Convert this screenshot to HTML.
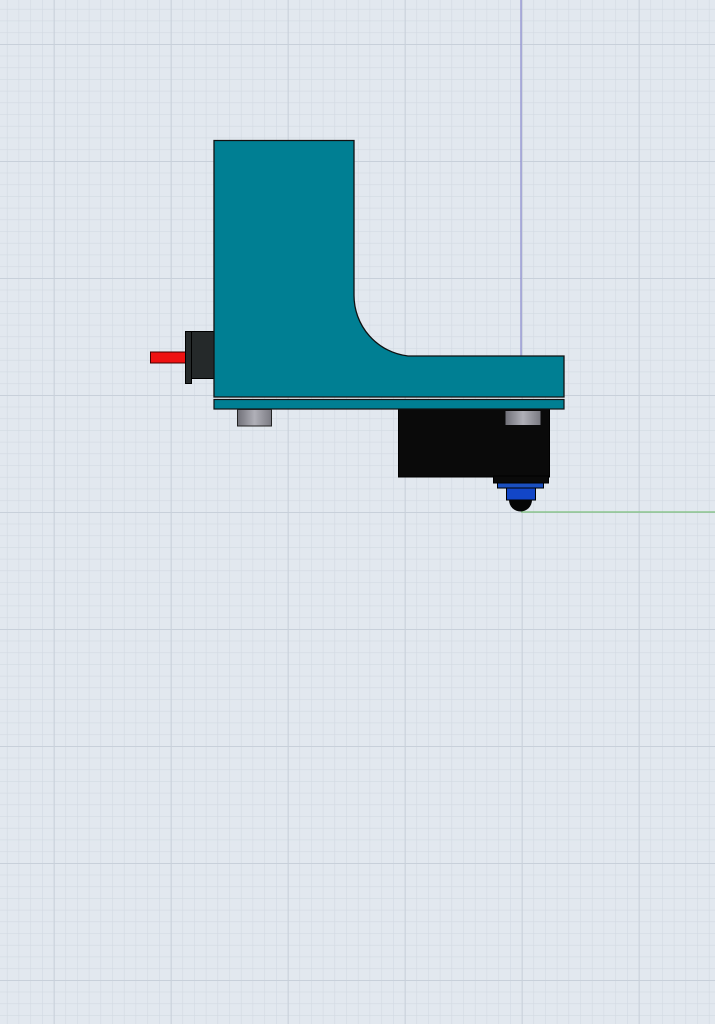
<!DOCTYPE html>
<html><head><style>html,body{margin:0;padding:0;background:#e2e8ef;overflow:hidden}</style></head>
<body>
<svg width="715" height="1024" viewBox="0 0 715 1024" xmlns="http://www.w3.org/2000/svg" style="display:block">
<defs>
<pattern id="minor" x="-63.3" y="-73" width="11.7" height="11.7" patternUnits="userSpaceOnUse">
<path d="M0 0H11.7M0 0V11.7" stroke="#d2d9e2" stroke-width="1.2" fill="none"/>
</pattern>
<pattern id="major" x="-63.3" y="-73" width="117" height="117" patternUnits="userSpaceOnUse">
<path d="M0 0H117M0 0V117" stroke="#c8d0da" stroke-width="2" fill="none"/>
</pattern>
<linearGradient id="g" x1="0" x2="1" y1="0" y2="0">
<stop offset="0" stop-color="#707078"/><stop offset="0.5" stop-color="#b0b0b8"/><stop offset="1" stop-color="#7a7a82"/>
</linearGradient>
</defs>
<rect width="715" height="1024" fill="#e2e8ef"/>
<rect width="715" height="1024" fill="url(#minor)"/>
<rect width="715" height="1024" fill="url(#major)"/>
<line x1="521" y1="0" x2="521" y2="356" stroke="#8a8ad0" stroke-width="1.2"/>
<line x1="521" y1="512" x2="715" y2="512" stroke="#7cc07c" stroke-width="1.2"/>
<rect x="150.5" y="352" width="36" height="11" fill="#ee1111" stroke="#400" stroke-width="1"/>
<rect x="185.5" y="331.5" width="6" height="52" fill="#25292a" stroke="#000" stroke-width="1"/>
<rect x="191.5" y="331.5" width="23" height="47" fill="#25292a" stroke="#000" stroke-width="1"/>
<path d="M214 140.5H354V295A61 61 0 0 0 408 356H564V397H214Z" fill="#007f93" stroke="#111" stroke-width="1.3"/>
<rect x="398.5" y="409" width="151" height="68" fill="#0a0a0a" stroke="#000"/>
<rect x="493.5" y="476" width="55" height="7" fill="#0a0a0a" stroke="#000"/>
<rect x="505.5" y="411" width="35" height="14" fill="url(#g)"/>
<rect x="214" y="399.5" width="350" height="9.5" fill="#007f93" stroke="#111" stroke-width="1.2"/>
<rect x="237.5" y="409.5" width="34" height="16.5" fill="url(#g)" stroke="#222"/>
<rect x="497.5" y="483" width="46" height="5" fill="#1a4fc0" stroke="#000"/>
<rect x="506.5" y="488" width="29" height="12" fill="#1246c8" stroke="#000"/>
<path d="M509 500A11.5 11.5 0 0 0 532 500Z" fill="#050505"/>
</svg>
</body></html>
